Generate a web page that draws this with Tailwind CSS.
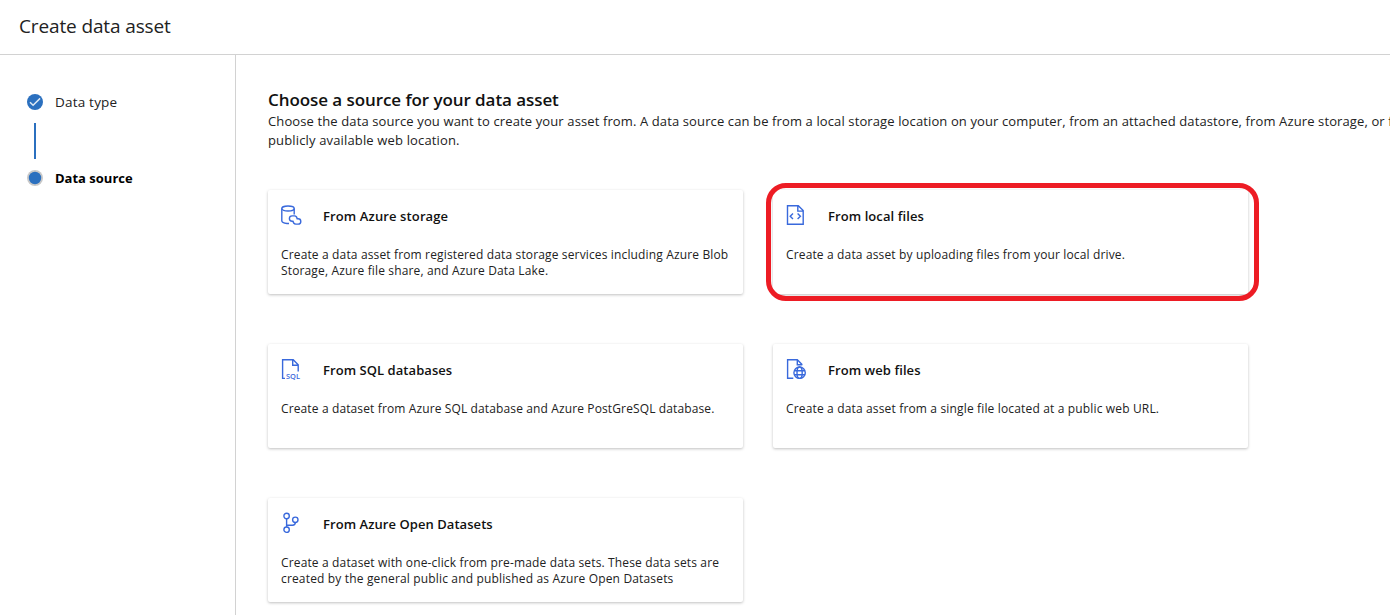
<!DOCTYPE html>
<html lang="en">
<head>
<meta charset="utf-8">
<title>Create data asset</title>
<script src="https://cdn.jsdelivr.net/npm/@tailwindcss/browser@4"></script>
</head>
<body class="h-[615px] w-[1390px] overflow-hidden bg-white font-['Open_Sans','Noto_Sans',sans-serif] text-[#222]">
<header class="flex h-[55px] items-center border-b border-[#d2d2d2] pb-0.5 pl-[19px] text-[19px] tracking-[-0.13px]">Create data asset</header>
<div class="flex h-[560px]">
  <aside class="w-[236px] shrink-0 border-r border-[#d2d2d2] pt-[37px] pl-[27px] leading-5">
    <div class="flex h-5 items-center gap-3 text-[13.5px] tracking-[0.2px]">
      <svg class="size-4" viewBox="0 0 16 16"><circle cx="8" cy="8" r="8" fill="#2b70bf"/><path d="M3 8.2l3.1 3 7-6.8" fill="none" stroke="#dce8f4" stroke-width="1.5"/></svg>
      <span>Data type</span>
    </div>
    <div class="mt-[11px] mb-[9px] ml-[7px] h-9 w-0.5 bg-[#2b70bf]"></div>
    <div class="flex h-5 items-center gap-3 text-[13px] font-bold text-black">
      <svg class="size-4" viewBox="0 0 16 16"><circle cx="8" cy="8" r="8" fill="#c8c8c8"/><circle cx="8" cy="8" r="6.2" fill="#2b70bf"/></svg>
      <span>Data source</span>
    </div>
  </aside>
  <main class="min-w-0 flex-1 overflow-hidden pt-[33px] pl-8 whitespace-nowrap">
    <h1 class="h-6 text-[17px] leading-[23px] font-semibold tracking-[-0.07px] text-[#111]">Choose a source for your data asset</h1>
    <p class="text-[13px] leading-[19px] tracking-[0.15px]"><span class="tracking-[0.118px]">Choose the data source you want to create your asset from. A data source can be from a local storage location on your computer, from an attached datastore, from Azure storage, or f</span><br>publicly available web location.</p>
    <div class="mt-10 grid grid-cols-[475px_475px] gap-x-[30px] gap-y-[50px] text-xs leading-4 tracking-[0.145px]">
      <section class="h-[104px] rounded-xs pt-[11px] pl-[13px] shadow-[0_1px_3px_rgba(0,0,0,0.25)]">
        <div class="flex h-[30px] items-center gap-[18px]">
          <svg class="mb-0.5 size-6" viewBox="0 0 24 24" fill="none" stroke="#3969dc" stroke-width="1.4"><ellipse cx="7" cy="5.5" rx="6.2" ry="2.5"/><path d="M.8 5.5v12.3c0 1.3 2 2.4 5.2 2.7h2M13.2 5.5v6"/><path d="M12.5 18.3h-1.4a2.7 2.7 0 0 1 0-5.4h2.3a2.7 2.7 0 0 1 2.6 3.4M15.5 15.7h1.6a2.7 2.7 0 0 1 0 5.4h-2.3a2.7 2.7 0 0 1-2.6-3.4"/></svg>
          <h2 class="text-[13px] font-semibold tracking-[0.12px] text-[#111]">From Azure storage</h2>
        </div>
        <p class="mt-4">Create a data asset from registered data storage services including Azure Blob<br>Storage, Azure file share, and Azure Data Lake.</p>
      </section>
      <section class="relative h-[104px] rounded-xs pt-[11px] pl-[13px] shadow-[0_1px_3px_rgba(0,0,0,0.25)]">
        <div class="absolute -top-[7px] -left-[7px] h-[118px] w-[493px] rounded-[20px] border-5 border-[#ed1c24]"></div>
        <div class="flex h-[30px] items-center gap-[18px]">
          <svg class="mb-0.5 size-6" viewBox="0 0 24 24" fill="none" stroke="#3969dc" stroke-width="1.4"><path d="M1.5 2.7h10.8l4.9 4.9v13.7H1.5zM11.8 2.7v5.4h5.2M7 10.5l-2.8 2.8L7 16M11.6 10.5l2.8 2.8-2.8 2.7"/></svg>
          <h2 class="text-[13px] font-semibold tracking-[0.08px] text-[#111]">From local files</h2>
        </div>
        <p class="mt-4">Create a data asset by uploading files from your local drive.</p>
      </section>
      <section class="h-[104px] rounded-xs pt-[11px] pl-[13px] shadow-[0_1px_3px_rgba(0,0,0,0.25)]">
        <div class="flex h-[30px] items-center gap-[18px]">
          <svg class="mb-0.5 size-6" viewBox="0 0 24 24" fill="none" stroke="#3969dc" stroke-width="1.4"><path d="M4 21.4H1.6V2.7h10.6l5 5v6.8M11.7 2.7v5.6h5.6"/><text x="5" y="21.6" font-size="7.6" font-weight="600" textLength="14" lengthAdjust="spacingAndGlyphs" letter-spacing="0" fill="#3969dc" stroke="none">SQL</text></svg>
          <h2 class="text-[13px] font-semibold tracking-[0.06px] text-[#111]">From SQL databases</h2>
        </div>
        <p class="mt-4 tracking-[0.125px]">Create a dataset from Azure SQL database and Azure PostGreSQL database.</p>
      </section>
      <section class="h-[104px] rounded-xs pt-[11px] pl-[13px] shadow-[0_1px_3px_rgba(0,0,0,0.25)]">
        <div class="flex h-[30px] items-center gap-[18px]">
          <svg class="mb-0.5 size-6" viewBox="0 0 24 24" fill="none" stroke="#3969dc" stroke-width="1.4"><path d="M7.3 21.3H1.6V2.7h9.7l5 5M11.3 2.7v5.1h5"/><circle cx="13.6" cy="15.7" r="5.7"/><ellipse cx="13.6" cy="15.7" rx="2.6" ry="5.7"/><path d="M8.3 13.8h10.8M8.3 17.8h10.8"/></svg>
          <h2 class="text-[13px] font-semibold tracking-[0.07px] text-[#111]">From web files</h2>
        </div>
        <p class="mt-4 tracking-[0.155px]">Create a data asset from a single file located at a public web URL.</p>
      </section>
      <section class="h-[104px] rounded-xs pt-[11px] pl-[13px] shadow-[0_1px_3px_rgba(0,0,0,0.25)]">
        <div class="flex h-[30px] items-center gap-[18px]">
          <svg class="mb-0.5 size-6" viewBox="0 0 24 24" fill="none" stroke="#3969dc" stroke-width="1.4"><circle cx="5.6" cy="5" r="2.7"/><circle cx="5.6" cy="18.7" r="2.7"/><circle cx="14.3" cy="8.8" r="2.7"/><path d="M5.6 7.7V16M14.3 11.5c0 2-1 2.7-2.8 2.7H5.6"/></svg>
          <h2 class="text-[13px] font-semibold tracking-[0.06px] text-[#111]">From Azure Open Datasets</h2>
        </div>
        <p class="mt-4">Create a dataset with one-click from pre-made data sets. These data sets are<br><span class="tracking-[0.16px]">created by the general public and published as Azure Open Datasets</span></p>
      </section>
    </div>
  </main>
</div>
</body>
</html>
